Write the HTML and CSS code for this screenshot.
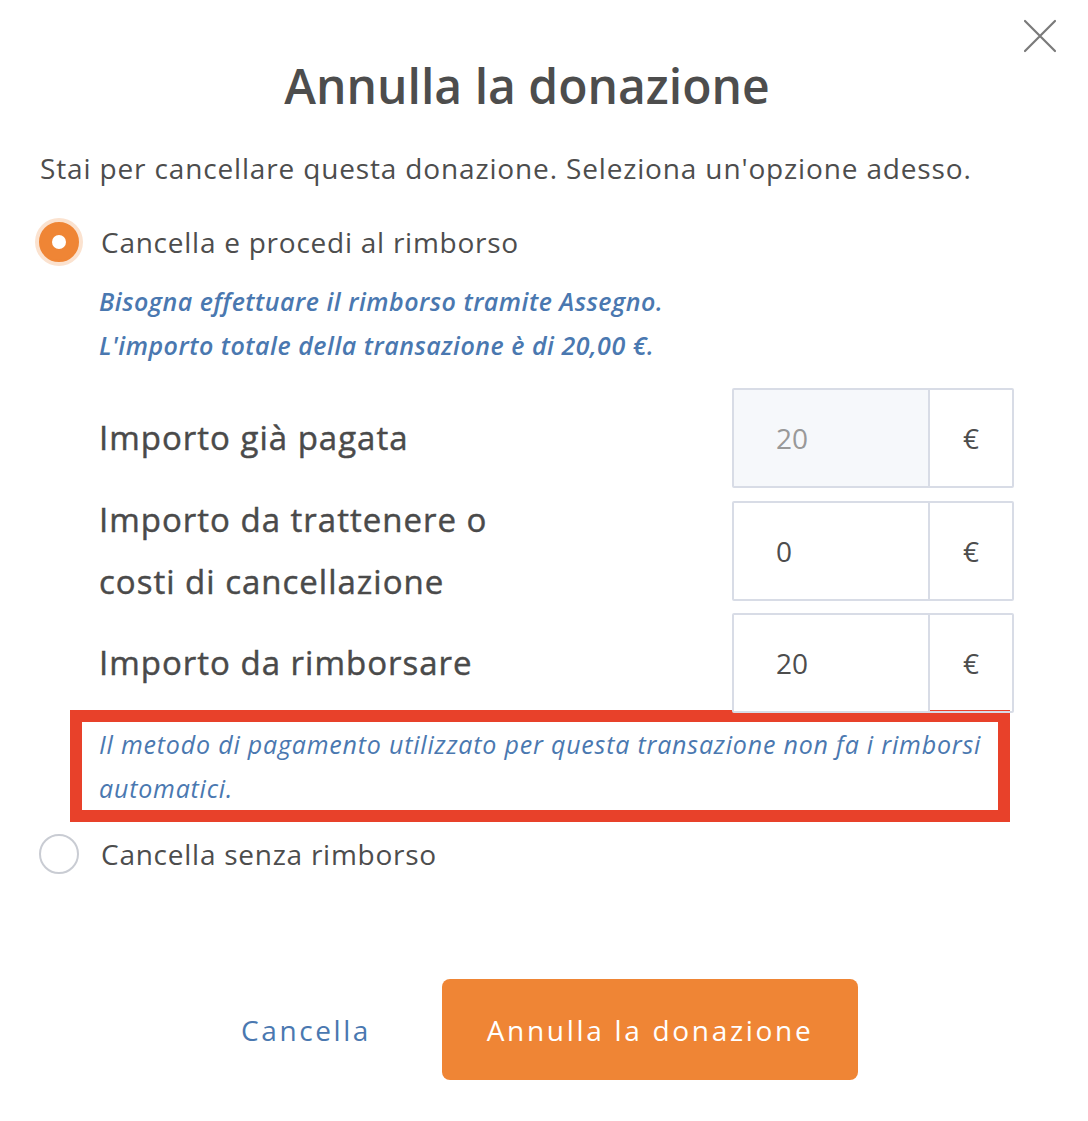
FILE: index.html
```html
<!DOCTYPE html>
<html lang="it">
<head>
<meta charset="utf-8">
<title>Annulla la donazione</title>
<link rel="stylesheet" href="styles.css">
</head>
<body>
<div class="modal">
  <button class="close" aria-label="Chiudi">
    <svg width="34" height="34" viewBox="0 0 34 34"><path d="M2 2 L32 32 M32 2 L2 32" stroke="#7a7a7a" stroke-width="2.2" fill="none" stroke-linecap="round"/></svg>
  </button>
  <h1 class="title">Annulla la donazione</h1>
  <p class="intro">Stai per cancellare questa donazione. Seleziona un'opzione adesso.</p>

  <label class="option">
    <span class="radio checked"><span class="dot"></span></span>
    <span class="option-text">Cancella e procedi al rimborso</span>
  </label>

  <div class="details">
    <p class="notice">Bisogna effettuare il rimborso tramite Assegno.<br>L'importo totale della transazione è di 20,00 €.</p>

    <div class="row">
      <div class="row-label">Importo già pagata</div>
      <div class="field">
        <div class="field-input disabled">20</div>
        <div class="field-unit">€</div>
      </div>
    </div>
    <div class="row">
      <div class="row-label">Importo da trattenere o<br>costi di cancellazione</div>
      <div class="field">
        <div class="field-input">0</div>
        <div class="field-unit">€</div>
      </div>
    </div>
    <div class="row">
      <div class="row-label">Importo da rimborsare</div>
      <div class="field">
        <div class="field-input">20</div>
        <div class="field-unit">€</div>
      </div>
    </div>
  </div>

  <div class="warning">
    <p>Il metodo di pagamento utilizzato per questa transazione non fa i rimborsi automatici.</p>
  </div>

  <label class="option option-second">
    <span class="radio"></span>
    <span class="option-text">Cancella senza rimborso</span>
  </label>

  <div class="actions">
    <button class="btn-link">Cancella</button>
    <button class="btn-primary">Annulla la donazione</button>
  </div>
</div>
</body>
</html>
```

FILE: styles.css
```css
* { box-sizing: border-box; }
html, body { margin: 0; padding: 0; background: #fff; }
body {
  font-family: "Open Sans", "Lato", sans-serif;
  color: #4a4a4a;
}
.modal {
  position: relative;
  width: 1088px;
  min-height: 1121px;
  padding: 56px 74px 0 40px;
}
.close {
  position: absolute;
  top: 19px;
  right: 31px;
  background: none;
  border: 0;
  padding: 0;
  width: 34px;
  height: 34px;
  cursor: pointer;
}
.title {
  margin: 0;
  text-align: center;
  font-size: 48px;
  line-height: 60px;
  font-weight: 600;
  color: #4d4d4d;
}
.intro {
  margin: 32px 0 0;
  font-size: 28px;
  line-height: 40px;
  letter-spacing: 0.85px;
  color: #4d4d4d;
}
.option {
  display: flex;
  align-items: center;
  margin-top: 30px;
  height: 48px;
}
.radio {
  width: 40px;
  height: 40px;
  border-radius: 50%;
  border: 2px solid #c9ccd3;
  background: #fff;
  margin-left: -1px;
  margin-right: 22px;
  display: flex;
  align-items: center;
  justify-content: center;
  flex: none;
}
.radio.checked {
  background: #ef8535;
  border-color: #ef8535;
  box-shadow: 0 0 0 4px #fbe2cf;
}
.radio .dot {
  width: 14px;
  height: 14px;
  border-radius: 50%;
  background: #fff;
}
.option-text {
  font-size: 28px;
  letter-spacing: 0.75px;
  color: #4d4d4d;
}
.details {
  padding-left: 59px;
}
.notice {
  margin: 13px 0 0;
  font-size: 25px;
  line-height: 44px;
  letter-spacing: 0.5px;
  font-style: italic;
  font-weight: 600;
  color: #4a78b0;
}
.row {
  display: flex;
  align-items: center;
  justify-content: space-between;
  height: 100px;
  margin-top: 13px;
}
.details .notice + .row { margin-top: 21px; }
.row:last-child { margin-top: 12px; }
.row-label {
  font-size: 33px;
  line-height: 62px;
  font-weight: 500;
  color: #4a4a4a;
  letter-spacing: 1px;
  -webkit-text-stroke: 0.45px #4a4a4a;
}
.field {
  display: flex;
  width: 282px;
  height: 100px;
  border: 2px solid #d8dce6;
  border-radius: 2px;
  flex: none;
}
.field-input {
  flex: 1;
  display: flex;
  align-items: center;
  padding-left: 42px;
  font-size: 28px;
  color: #4d4d4d;
  background: #fff;
}
.field-input.disabled {
  background: #f6f8fb;
  color: #999;
}
.field-unit {
  width: 84px;
  display: flex;
  align-items: center;
  justify-content: center;
  border-left: 2px solid #d8dce6;
  font-size: 28px;
  color: #4d4d4d;
}
.warning {
  margin: -3px 4px 0 30px;
  border: 12px solid #e8412a;
  padding: 0 8px 0 17px;
}
.warning p {
  margin: 0;
  font-size: 25px;
  line-height: 44px;
  letter-spacing: 0.8px;
  font-style: italic;
  color: #4a78b0;
}
.option-second { margin-top: 8px; }
.actions {
  display: flex;
  justify-content: center;
  align-items: center;
  gap: 71px;
  margin-top: 101px;
  padding-left: 45px;
}
.btn-link {
  background: none;
  border: 0;
  font-family: "Open Sans", sans-serif;
  font-size: 28px;
  letter-spacing: 2.6px;
  color: #4a78b0;
  padding: 0;
  cursor: pointer;
}
.btn-primary {
  width: 416px;
  height: 101px;
  background: #ef8535;
  border: 0;
  border-radius: 8px;
  font-family: "Open Sans", sans-serif;
  font-size: 28px;
  letter-spacing: 2.7px;
  color: #fff;
  cursor: pointer;
}
```
